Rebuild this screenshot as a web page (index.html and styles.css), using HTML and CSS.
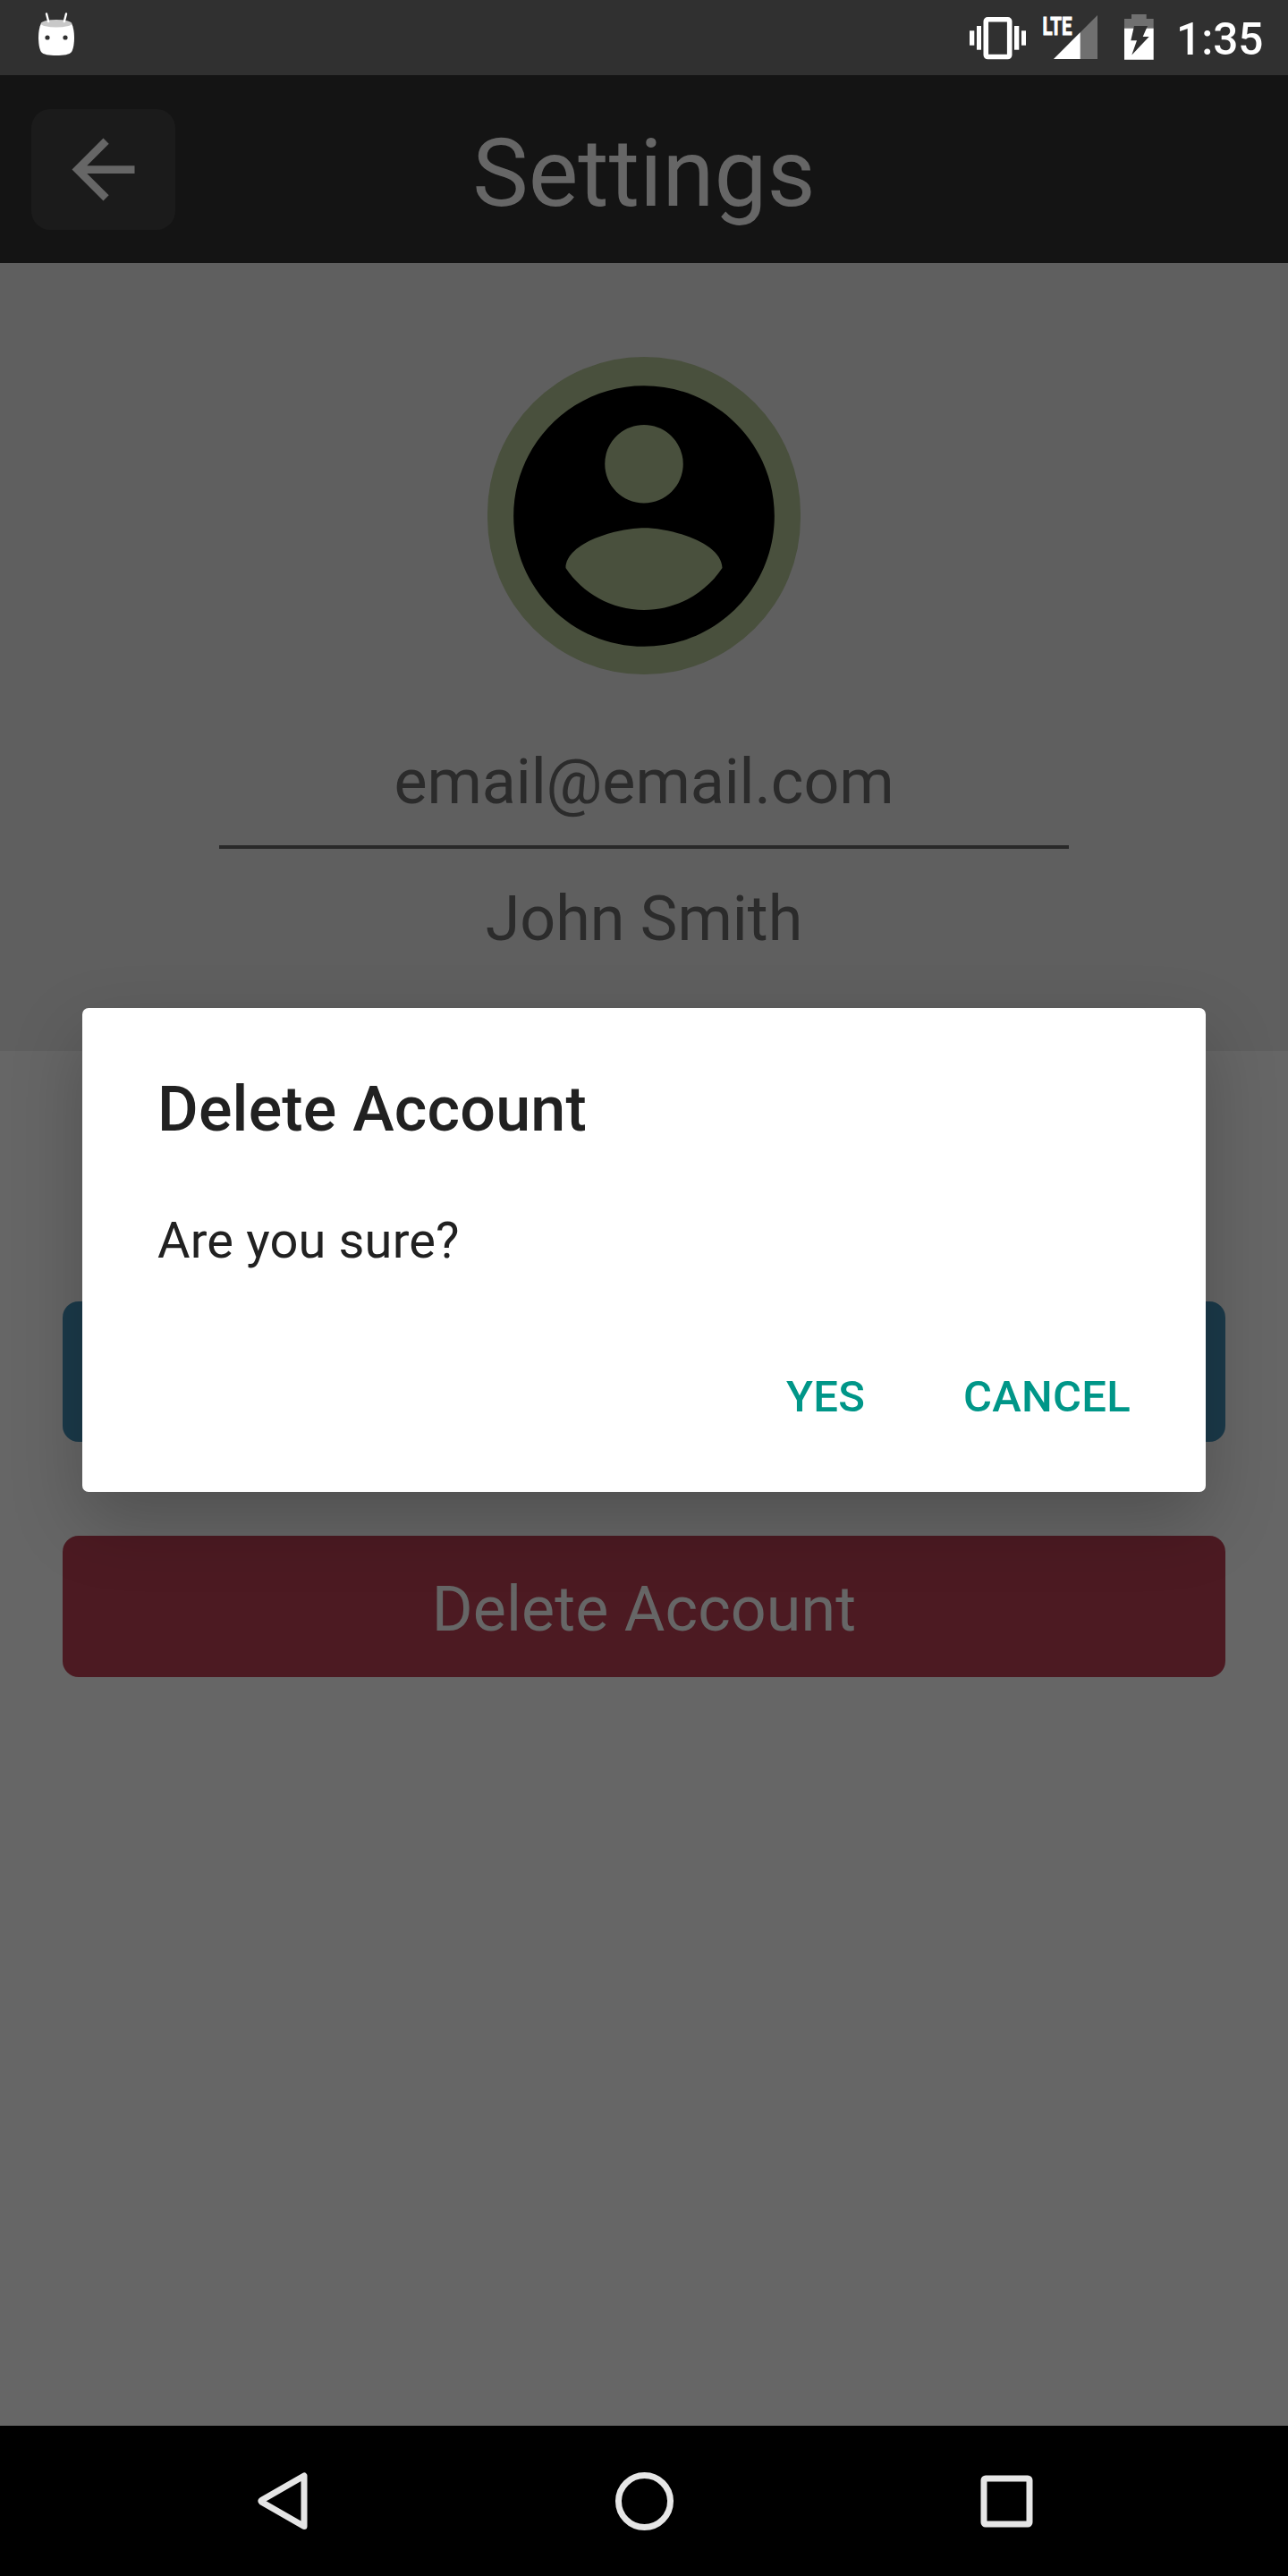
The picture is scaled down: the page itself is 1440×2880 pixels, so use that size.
FILE: index.html
```html
<!DOCTYPE html>
<html lang="en">
<head>
<meta charset="utf-8">
<title>Settings</title>
<link rel="stylesheet" href="styles.css">
</head>
<body>
<div class="screen">
  <div class="status-bar">
    <svg class="debug-icon" width="40" height="48" viewBox="0 0 40 48">
      <path d="M3 12C1 16 0 22 0 28C0 34 1 41 3 44C5 47 12 48 20 48S35 47 37 44C39 41 40 34 40 28C40 22 39 16 37 12Z" fill="#fff"/>
      <ellipse cx="20" cy="12.3" rx="17.3" ry="4.3" fill="#c8c8c8"/>
      <path d="M9 1.5L11.2 10M31 1.5L28.8 10" stroke="#fff" stroke-width="2.4" stroke-linecap="round"/>
      <circle cx="10" cy="28" r="2.6" fill="#303030"/><circle cx="30" cy="28" r="2.6" fill="#303030"/>
    </svg>
    <div class="status-icons">
      <svg class="vibrate" width="63" height="48" viewBox="0 0 63 48" fill="#fff">
        <rect x="0" y="15.3" width="5.3" height="16.4"/><rect x="8" y="10" width="5" height="26.7"/>
        <rect x="18.3" y="2.8" width="26.4" height="41.7" rx="2" fill="none" stroke="#fff" stroke-width="5.6"/>
        <rect x="50" y="10" width="5.3" height="26.7"/><rect x="58" y="15.3" width="5" height="16.4"/>
      </svg>
      <svg class="signal" width="61" height="50" viewBox="0 0 61 50">
        <path d="M61 0V49H12Z" fill="#707070"/><path d="M41.7 19.3V49H12Z" fill="#fff"/>
        <text class="lte" x="-0.5" y="21.5" textLength="33" lengthAdjust="spacingAndGlyphs">LTE</text>
      </svg>
      <svg class="battery" width="33" height="51" viewBox="0 0 33 51">
        <path d="M8 0H24.7V5H32.7V16H0V5H8Z" fill="#707070"/><path d="M0 15.7H32.7V50.7H0Z" fill="#fff"/>
        <path d="M11 13H26L20.7 25H27.7L8.3 45.5L14 29.3H7.3Z" fill="#303030"/>
      </svg>
      <span class="clock">1:35</span>
    </div>
  </div>
  <header class="header">
    <div class="back-button">
      <svg width="105" height="105" viewBox="0 0 24 24"><path fill="#666" d="M20 11H7.83l5.59-5.59L12 4l-8 8 8 8 1.41-1.41L7.83 13H20v-2z"/></svg>
    </div>
    <h1 class="title">Settings</h1>
  </header>
  <section class="profile">
    <div class="avatar">
      <svg width="350" height="350" viewBox="0 0 24 24"><path d="M12 2C6.48 2 2 6.48 2 12s4.48 10 10 10 10-4.48 10-10S17.52 2 12 2zm0 3c1.66 0 3 1.34 3 3s-1.34 3-3 3-3-1.34-3-3 1.34-3 3-3zm0 14.2c-2.5 0-4.71-1.28-6-3.22.03-1.99 4-3.08 6-3.08 1.99 0 5.97 1.09 6 3.08-1.29 1.94-3.5 3.22-6 3.22z"/></svg>
    </div>
    <div class="email">email@email.com</div>
    <div class="name">John Smith</div>
  </section>
  <main class="actions">
    <div class="button button-primary"></div>
    <div class="button button-danger">Delete Account</div>
  </main>
  <nav class="nav-bar">
    <svg width="66" height="66" viewBox="0 0 66 66"><path d="M58 5V61.5L10.5 34.2Q9.2 33.2 10.5 32.3Z" fill="none" stroke="#e6e6e6" stroke-width="7" stroke-linejoin="round"/></svg>
    <svg width="66" height="66" viewBox="0 0 66 66"><circle cx="33.5" cy="33.5" r="29" fill="none" stroke="#e6e6e6" stroke-width="7"/></svg>
    <svg width="66" height="66" viewBox="0 0 66 66"><rect x="8" y="8" width="51" height="51" rx="2" fill="none" stroke="#e6e6e6" stroke-width="7"/></svg>
  </nav>
  <div class="dialog">
    <h2 class="dialog-title">Delete Account</h2>
    <p class="dialog-message">Are you sure?</p>
    <div class="dialog-actions"><span>YES</span><span>CANCEL</span></div>
  </div>
</div>
</body>
</html>
```
FILE: styles.css
```css
* { box-sizing: border-box; margin: 0; }
body { font-family: Roboto, "Liberation Sans", sans-serif; background: #666; }
svg { display: block; flex: none; overflow: visible; }
.screen { position: relative; width: 1440px; height: 2880px; display: flex; flex-direction: column; overflow: hidden; }
.status-bar { height: 84px; background: #303030; display: flex; justify-content: space-between; align-items: flex-start; padding: 0 28px 0 43px; }
.debug-icon { margin-top: 14px; }
.status-icons { display: flex; align-items: flex-start; }
.vibrate { margin: 19px 19px 0 0; }
.signal { margin: 17px 30px 0 0; }
.lte { font-size: 28px; font-weight: 700; fill: #fff; stroke: #fff; stroke-width: 0.9px; }
.battery { margin: 16px 25px 0 0; }
.clock { width: 97px; font-size: 49.5px; font-weight: 500; line-height: 58px; margin-top: 15px; color: #fff; white-space: nowrap; }
.header { height: 210px; background: #141414; display: grid; grid-template-columns: 161px 1fr 161px; align-items: center; padding: 0 35px; }
.back-button { width: 161px; height: 135px; border-radius: 21px; background: #1b1b1b; display: flex; align-items: center; justify-content: center; }
.title { font-size: 105px; font-weight: 400; line-height: 124px; padding-top: 12px; color: #666; text-align: center; }
.profile { height: 881px; background: #5f5f5f; display: flex; flex-direction: column; align-items: center; padding-top: 105px; }
.avatar { width: 350px; height: 355px; border-radius: 175px; background: #49503d; display: flex; align-items: center; justify-content: center; }
.email, .name { width: 950px; text-align: center; font-size: 70px; line-height: 82px; color: #2b2b2b; }
.email { margin-top: 79px; height: 116px; letter-spacing: -0.1px; border-bottom: 4px solid #292929; }
.name { margin-top: 37px; }
.actions { flex: 1; background: #666; display: flex; flex-direction: column; gap: 105px; padding: 280px 70px 0; }
.button { height: 157px; border-radius: 18px; display: flex; align-items: center; justify-content: center; font-size: 70px; line-height: 82px; color: #666; }
.button-primary { background: #1b3a4a; }
.button-danger { height: 158px; background: #4c1a22; padding-top: 5px; letter-spacing: 0.05px; }
.nav-bar { height: 168px; background: #000; display: flex; justify-content: center; gap: 339px; align-items: center; }
.dialog { position: absolute; left: 92px; top: 1127px; width: 1256px; height: 541px; border-radius: 7px; background: #fff; padding: 72px 84px 0; box-shadow: 0 32px 80px rgba(0,0,0,.22); color: #212121; }
.dialog-title { font-size: 70px; font-weight: 500; line-height: 82px; letter-spacing: 0.2px; }
.dialog-message { font-size: 56px; line-height: 66px; margin-top: 73px; letter-spacing: 0.15px; }
.dialog-actions { display: flex; justify-content: flex-end; gap: 110px; margin-top: 113px; font-size: 49px; font-weight: 500; line-height: 58px; letter-spacing: 0.25px; color: #009688; }
```
